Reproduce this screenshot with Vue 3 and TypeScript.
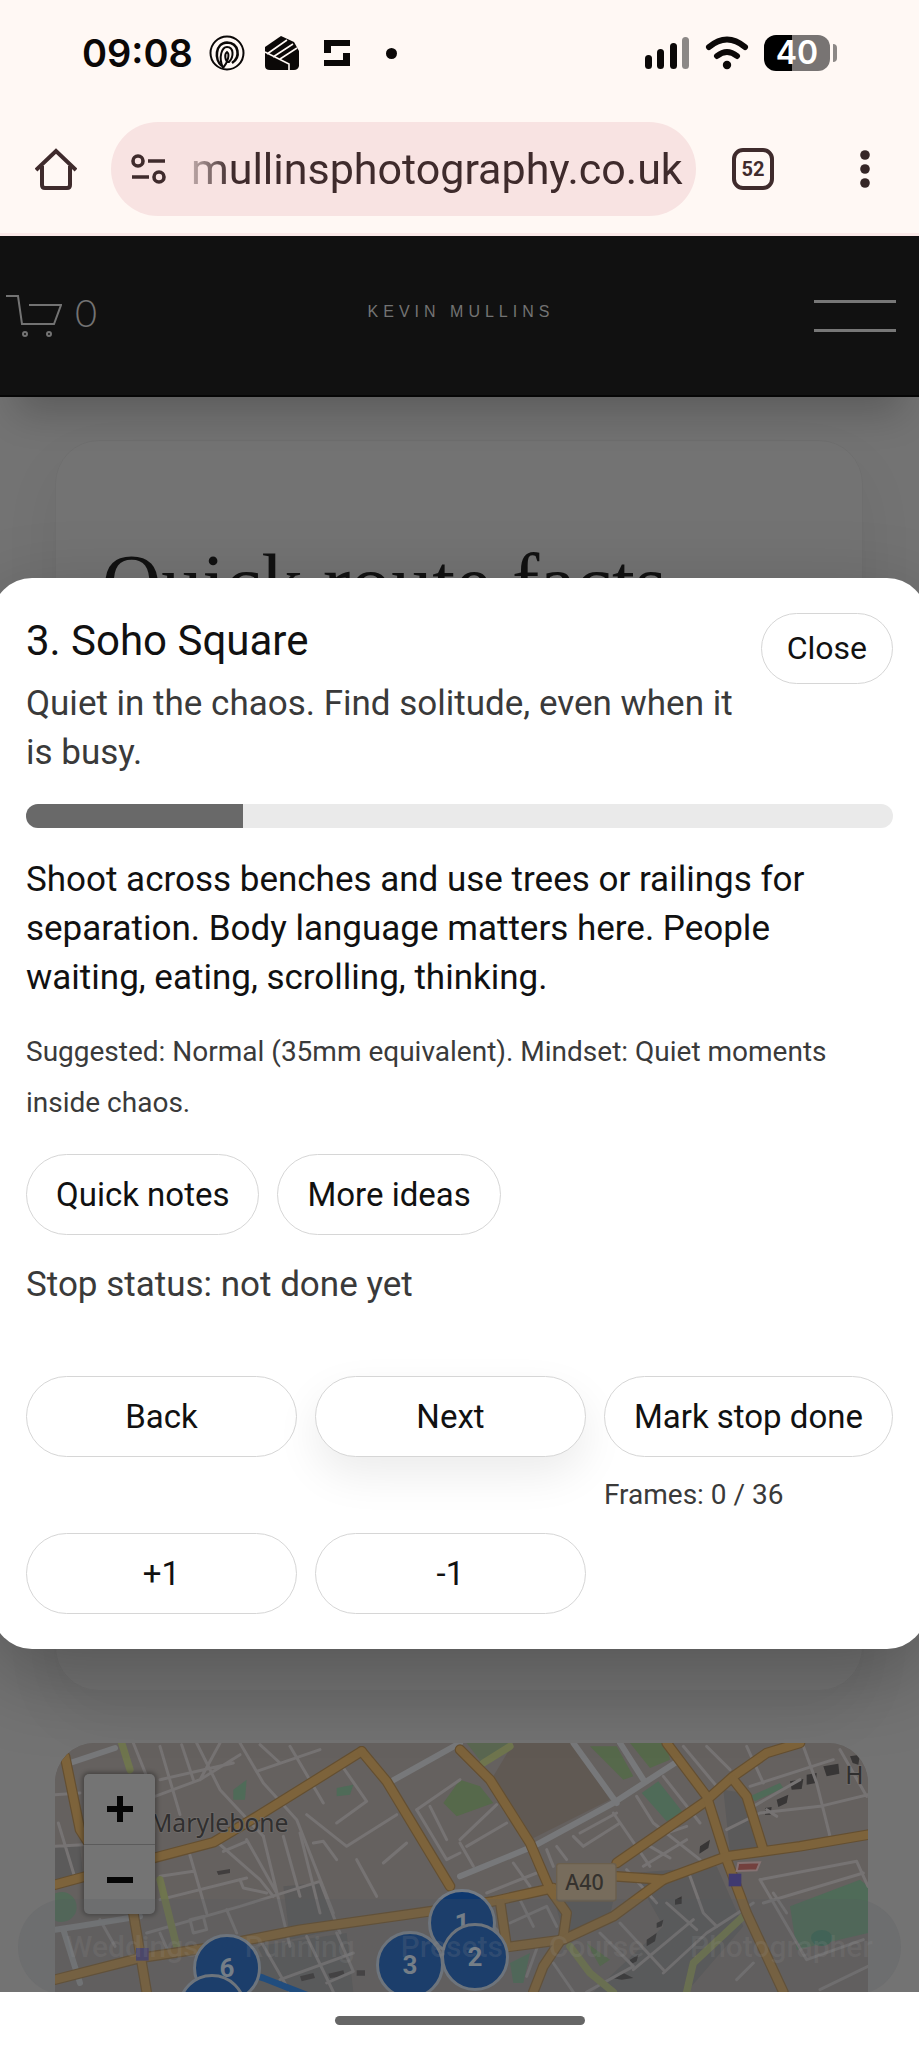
<script setup lang="ts">
import { computed, ref } from 'vue'

interface Pin {
  label: string
  left: number
  top: number
}

const stop = ref(3)
const totalStops = 12
const frames = ref(0)
const done = ref(false)
const open = ref(true)
const progress = computed(() => `${(stop.value / totalStops) * 100}%`)

const pins: Pin[] = [
  { label: '6', left: 172, top: 225 },
  { label: '', left: 157, top: 265 },
  { label: '3', left: 355, top: 222 },
  { label: '1', left: 407, top: 180 },
  { label: '2', left: 420, top: 214 },
]

const mainRoads: string[] = [
  'M165 555 L480 470 L640 428 L780 345 L1085 155',
  'M1085 155 L1160 245 L1350 560',
  'M165 840 L420 775 L620 745 L900 690 L1290 635 L1480 605 L1660 565',
  'M195 170 L240 390 L400 640 L440 877',
  'M1380 150 L1470 240 L1590 430 L1650 570 L1700 640 L1690 710 L1630 800 L1600 877',
  'M1500 745 L1690 720 L1840 650 L1990 540 L1850 530',
  'M1850 490 L2110 310 L2200 230 L2300 160 L2400 130',
  'M2000 130 L2120 290 L2180 480 L2240 640 L2350 877',
  'M1990 540 L2180 470 L2400 440 L2604 405',
  'M2200 240 L2240 290 L2290 450',
  'M1500 605 L1520 740',
]

const wideStreets: string[] = [
  'M210 190 L345 145',
  'M165 690 L235 680 L420 650',
  'M1165 250 L1380 130',
  'M1380 530 L1600 440 L1840 310 L2040 180',
  'M1720 130 L1850 310',
  'M1860 130 L1930 240',
  'M190 690 L240 850',
]

const streets: string[] = [
  'M165 285 L240 280 M175 370 L225 535 M165 440 L250 435',
  'M400 130 L440 230 M480 140 L540 345 M545 135 L580 240 M590 130 L660 270 L790 410',
  'M465 290 L600 240 L720 165 M480 240 L700 190 M660 130 L600 240 M720 130 L790 250 L890 360 L1000 640',
  'M770 215 L960 150 M870 140 L970 310 M780 135 L840 190 M1020 190 L1100 305 L1010 370 M920 345 L1040 440 L1190 345',
  'M790 410 L870 740 M850 410 L900 590 M900 400 L960 640 M740 420 L830 580 M660 435 L780 540 L820 590',
  'M565 450 L620 640 M480 530 L580 515 M480 600 L740 535 M440 700 L720 620 L960 545 L1020 700',
  'M670 455 L740 425 M720 540 L730 565 L800 580 M570 660 L610 650 L620 690 L580 700 Z M680 630 L710 700',
  'M940 430 L970 425 L1010 480 M1070 480 L1130 590 M1150 490 L1220 430 M1250 330 L1340 480 L1380 460',
  'M1250 330 L1380 240 M1290 320 L1340 420 M300 660 L345 740 M480 700 L500 745',
  'M780 720 L870 877 M920 710 L1000 877 M1010 700 L1060 815 L980 850 M840 840 L1060 760 M600 740 L660 877',
  'M1380 420 L1490 315 M1400 440 L1520 370 M1380 430 L1420 500 M1540 490 L1590 560 M1460 580 L1610 520',
  'M1640 450 L1660 500 M1670 440 L1700 480 M1720 410 L1750 440 L1860 370 M1740 400 L1850 340 M1840 340 L1950 500',
  'M1910 290 L1960 370 L2100 480 M1990 230 L2100 370 M1930 500 L2060 420 M1950 440 L2010 475 M1970 410 L2060 380',
  'M2050 140 L2150 260 M2120 140 L2190 210 M2240 140 L2290 250 M2250 260 L2500 180 M2260 320 L2400 240',
  'M2180 390 L2280 340 L2460 320 L2604 285 M2410 140 L2450 250 L2490 410 M2520 150 L2600 290 M2300 330 L2330 350',
  'M2280 540 L2570 485 L2604 560 M2290 610 L2590 520 M2280 540 L2420 780 L2590 720 M2320 580 L2360 640',
  'M2070 530 L2110 640 L2150 680 M1880 510 L1970 610 M2000 610 L2090 690 M1800 700 L1900 800 L1760 877',
  'M1900 810 L2080 660 M1990 820 L2120 700 L2260 610 M1860 670 L1990 810 M2210 840 L2260 790 M2460 870 L2604 800',
  'M1530 670 L1640 620 L1670 680 M1620 720 L1580 830 M1660 790 L1720 877 M1450 650 L1500 700 M1560 600 L1600 680',
]
</script>

<template>
  <div class="screen">
    <header class="status">
      <span class="time">09:08</span>
      <svg class="ic-swirl" viewBox="0 0 36 36" fill="none" stroke="#0b0807" stroke-width="2">
        <circle cx="18" cy="18" r="16.5" />
        <path d="M13 31 C5 25 6 8 18 7.500 C30 8 32 22 23 28" stroke-width="2.6" />
        <path d="M14 33 C9 22 13 12 18 12 C25 12 25 22 20 27 C16 27 15 19 18 17 C21 19 19 27 14 33" stroke-width="2" />
      </svg>
      <svg class="ic-fist" viewBox="0 0 36 36">
        <path d="M1 12 L17 1 L30 7 L35 16 V31 Q34 35 30 35 H6 Q1 35 1 31 Z" fill="#0b0807" />
        <path d="M3 19 L23 5 M9 22 L29 9 M16 24 L33 13 M1 17 L25 29 V35" fill="none" stroke="#fff8f4" stroke-width="1.6" />
      </svg>
      <svg class="ic-s" viewBox="0 0 28 28" fill="#0b0807">
        <path d="M1 1 H27 V7 H8 V14 H1 Z M27 27 H1 V21 H20 V14 H27 Z" />
      </svg>
      <i class="dot"></i>
      <span class="grow"></span>
      <svg class="ic-signal" viewBox="0 0 44 32">
        <rect x="0" y="18" width="7" height="14" rx="3.5" fill="#0b0807" />
        <rect x="12" y="12" width="7" height="20" rx="3.5" fill="#0b0807" />
        <rect x="25" y="6" width="7" height="26" rx="3.5" fill="#0b0807" />
        <rect x="37" y="0" width="7" height="32" rx="3.5" fill="#8c8886" />
      </svg>
      <svg class="ic-wifi" viewBox="0 0 44 34" fill="none" stroke="#0b0807" stroke-linecap="round">
        <path d="M4 11 Q22 -4 40 11" stroke-width="6" />
        <path d="M12 20 Q22 12 32 20" stroke-width="6" />
        <circle cx="22" cy="29" r="4.2" fill="#0b0807" stroke="none" />
      </svg>
      <span class="battery">40</span>
      <i class="battery-tip"></i>
    </header>

    <div class="toolbar">
      <button class="tool home" aria-label="Home">
        <svg viewBox="0 0 42 42" fill="none" stroke="#3f2b2c" stroke-width="4" stroke-linejoin="round">
          <path d="M1 22 L21 3 L41 22" stroke-linejoin="miter" />
          <path d="M7 18 V37 Q7 40 10 40 H32 Q35 40 35 37 V18" />
        </svg>
      </button>
      <div class="address">
        <svg viewBox="0 0 36 30" fill="none" stroke="#3f2b2c" stroke-width="3.6">
          <circle cx="7" cy="7" r="5" />
          <path d="M17 7 H34 M1 23 H18" />
          <circle cx="28" cy="23" r="5" />
        </svg>
        <span class="url">mullinsphotography.co.uk</span>
      </div>
      <button class="tool tabs" aria-label="Tabs"><span>52</span></button>
      <button class="tool more" aria-label="Menu">
        <svg viewBox="0 0 10 38" fill="#352626">
          <circle cx="5" cy="5" r="4.800" /><circle cx="5" cy="19" r="4.800" /><circle cx="5" cy="33" r="4.800" />
        </svg>
      </button>
    </div>

    <div class="viewport">
      <div class="site-header">
        <a class="cart" href="#" aria-label="Cart">
          <svg viewBox="0 0 56 44" fill="none" stroke="#737373" stroke-width="2">
            <path d="M0 2 H12 L16 30 H48 L55 11 H23" />
            <circle cx="19" cy="40" r="2" /><circle cx="43" cy="40" r="2" />
          </svg>
          <span>0</span>
        </a>
        <a class="brand" href="#">KEVIN MULLINS</a>
        <button class="burger" aria-label="Open menu"><i></i><i></i></button>
      </div>

      <main class="page">
        <section class="facts"><h1>Quick route facts</h1></section>
        <section class="map">
          <svg class="tiles" viewBox="165 130 2439 747" preserveAspectRatio="xMinYMin slice">
            <rect x="165" y="130" width="2439" height="900" fill="#65615f" />
            <g fill="#5b5a5a">
              <path d="M165 440 L240 435 L250 540 L165 550 Z M850 560 L960 550 L1010 690 L870 720 Z M700 750 L1040 700 L1060 877 H650 Z" />
              <path d="M1660 590 L1840 600 L1830 650 L1690 700 Z M1900 520 L2150 500 L2230 680 L2060 877 H1780 L1990 680 Z M2170 270 L2230 280 L2280 450 L2190 460 Z" />
            </g>
            <path d="M1540 130 H1720 L1830 300 L1590 420 L1480 230 Z" fill="#605953" />
            <g fill="#56694b">
              <path d="M1330 310 L1380 240 L1440 260 L1480 310 L1370 350 Z" />
              <path d="M1770 140 H1850 L1900 230 L1870 240 Z M1890 130 H2000 L2010 180 L1950 205 Z" />
              <path d="M1400 130 H1530 L1450 195 Z" opacity=".7" />
              <path d="M1760 730 L1830 780 L1800 800 Z" />
            </g>
            <g fill="#4f6b58">
              <circle cx="185" cy="622" r="45" fill="#526a58" />
              <path d="M1925 280 L1975 245 L2050 340 L2000 365 Z" />
              <path d="M2370 620 L2580 540 L2604 560 V700 L2390 750 Z" />
              <path d="M700 270 L740 240 L735 300 L700 300 Z M1010 265 L1060 255 L1050 285 L1010 290 Z" />
              <path d="M2250 290 L2340 250 L2350 265 L2265 305 Z M1530 790 L1590 760 L1570 850 L1540 850 Z" />
              <ellipse cx="2465" cy="715" rx="32" ry="24" fill="#3e6656" />
            </g>
            <g fill="#383636">
              <path d="M2370 245 L2410 238 L2405 268 L2375 270 Z M2420 225 L2450 220 L2448 250 L2420 255 Z M2470 200 L2515 192 L2518 222 L2480 230 Z M2550 170 L2580 165 L2575 195 L2558 190 Z" />
              <path d="M2330 300 L2365 285 L2360 310 L2335 322 Z M2295 325 L2315 322 L2312 345 L2295 345 Z M2100 440 L2130 420 L2125 445 L2098 462 Z" />
              <path d="M1900 835 L1870 820 L1835 835 L1865 840 Z M1940 720 L1970 700 L1965 725 L1940 740 Z M2025 600 L2045 590 L2045 612 L2025 615 Z M1890 780 L1915 765 L1910 785 L1890 795 Z M1970 670 L1990 660 L1985 680 L1970 685 Z" />
              <path d="M900 830 L940 820 L945 835 L905 845 Z M985 822 L1030 812 L1035 830 L990 835 Z M1070 812 H1095 V828 H1070 Z M650 515 L690 508 L690 520 L655 526 Z" opacity=".8" />
            </g>
            <g fill="none" stroke-linecap="round" stroke-linejoin="round">
              <path v-for="d in streets" :key="d" :d="d" stroke="#767373" stroke-width="9" />
              <path v-for="d in wideStreets" :key="d" :d="d" stroke="#77787a" stroke-width="18" />
              <path d="M365 130 L390 210 M480 540 L530 740 M1450 190 L1530 140 M2230 650 L2080 790 L2060 877 M1710 740 L1770 820 L1840 877" stroke="#6f754e" stroke-width="22" />
              <path v-for="d in mainRoads" :key="`c${d}`" :d="d" stroke="#644f31" stroke-width="32" />
              <path v-for="d in mainRoads" :key="`f${d}`" :d="d" stroke="#7d633b" stroke-width="25" />
              <path d="M700 805 L790 835 L930 890" stroke="#154a86" stroke-width="20" />
            </g>
            <rect x="408" y="745" width="38" height="38" fill="#49436c" />
            <rect x="2186" y="522" width="38" height="38" fill="#403a70" />
            <path d="M2215 490 L2280 488 L2270 512 L2210 514 Z" fill="#73403e" stroke="#857272" stroke-width="6" />
            <rect x="1670" y="492" width="178" height="112" rx="8" fill="#776c5c" stroke="#6b5f4d" stroke-width="4" />
            <text x="1696" y="572" class="road-label">A40</text>
            <text x="450" y="396" class="place-label">Marylebone</text>
            <text x="2536" y="252" class="place-label">H</text>
          </svg>
          <button v-for="(p, i) in pins" :key="i" class="pin" :style="{ left: p.left + 'px', top: p.top + 'px' }">{{ p.label }}</button>
          <div class="zoom">
            <button aria-label="Zoom in"><svg viewBox="0 0 26 26"><path d="M0 13 H26 M13 0 V26" stroke="#050505" stroke-width="6" /></svg></button>
            <button aria-label="Zoom out"><svg viewBox="0 0 26 26"><path d="M0 13 H26" stroke="#050505" stroke-width="6" /></svg></button>
          </div>
        </section>
      </main>

      <nav class="quick-links">
        <a href="#">Weddings</a><a href="#">Running</a><a href="#">Presets</a><a href="#">Course</a><a href="#">Photographer</a>
      </nav>

      <div v-if="open" class="backdrop">
        <section class="sheet" role="dialog" aria-labelledby="stop-title">
          <div class="head">
            <div>
              <h2 id="stop-title">{{ stop }}. Soho Square</h2>
              <p class="lead">Quiet in the chaos. Find solitude, even when it is busy.</p>
            </div>
            <button class="btn close" @click="open = false">Close</button>
          </div>
          <div class="bar"><div class="fill" :style="{ width: progress }"></div></div>
          <p class="body">Shoot across benches and use trees or railings for separation. Body language matters here. People waiting, eating, scrolling, thinking.</p>
          <p class="hint">Suggested: Normal (35mm equivalent). Mindset: Quiet moments inside chaos.</p>
          <div class="row">
            <button class="btn">Quick notes</button>
            <button class="btn">More ideas</button>
          </div>
          <p class="state">Stop status: {{ done ? 'done' : 'not done yet' }}</p>
          <div class="actions">
            <button class="btn" @click="stop--">Back</button>
            <button class="btn primary" @click="stop++">Next</button>
            <button class="btn" @click="done = true">Mark stop done</button>
            <span class="frames">Frames: {{ frames }} / 36</span>
            <button class="btn" @click="frames++">+1</button>
            <button class="btn" @click="frames--">-1</button>
          </div>
        </section>
      </div>
    </div>

    <footer class="gesture"><i></i></footer>
  </div>
</template>

<style>
body {
  margin: 0;
}
</style>

<style scoped>
.screen {
  display: flex;
  flex-direction: column;
  min-height: 100vh;
  overflow: hidden;
  background: #fff8f4;
  font-family: Roboto, "Liberation Sans", sans-serif;
  color: #111;
}
.screen * {
  box-sizing: border-box;
}
button {
  font: inherit;
  color: inherit;
  border: 0;
  padding: 0;
  background: none;
  cursor: pointer;
}
a {
  color: inherit;
  text-decoration: none;
}
svg {
  display: block;
  flex: none;
}
p, h1, h2 {
  margin: 0;
  font-weight: 400;
}

.status {
  display: flex;
  align-items: center;
  height: 106px;
  padding: 0 82px;
  color: #0b0807;
}
.time {
  font: 600 38px/48px Inter, sans-serif;
}
.ic-swirl {
  width: 36px;
  margin-left: 16px;
}
.ic-fist {
  width: 36px;
  margin-left: 19px;
}
.ic-s {
  width: 28px;
  margin-left: 23px;
}
.dot {
  width: 11px;
  height: 11px;
  margin-left: 35px;
  border-radius: 50%;
  background: #0b0807;
}
.grow {
  flex: 1;
}
.ic-signal {
  width: 44px;
}
.ic-wifi {
  width: 44px;
  margin-left: 16px;
}
.battery {
  width: 66px;
  height: 36px;
  margin-left: 15px;
  border-radius: 12px;
  background: linear-gradient(90deg, #000 42%, #787473 42%);
  color: #fff;
  font: 600 32px/36px Inter, sans-serif;
  text-align: center;
}
.battery-tip {
  width: 4px;
  height: 18px;
  margin-left: 3px;
  border-radius: 0 4px 4px 0;
  background: #8c8886;
}

.toolbar {
  display: flex;
  align-items: center;
  height: 130px;
  padding-bottom: 2px;
  border-bottom: 3px solid #fbe9e8;
}
.tool {
  display: flex;
  align-items: center;
  justify-content: center;
  height: 94px;
}
.home {
  width: 111px;
}
.home svg {
  width: 42px;
}
.address {
  display: flex;
  flex: 1;
  align-items: center;
  height: 94px;
  padding: 0 8px 0 20px;
  border-radius: 47px;
  background: #f8e3e2;
}
.address svg {
  width: 36px;
}
.url {
  flex: 1;
  width: 0;
  margin-left: 24px;
  color: #3f2b2c;
  font-size: 43px;
  line-height: 56px;
  white-space: nowrap;
  -webkit-mask-image: linear-gradient(90deg, rgba(0, 0, 0, .3), #000 40px);
  mask-image: linear-gradient(90deg, rgba(0, 0, 0, .3), #000 40px);
}
.tabs {
  width: 114px;
}
.tabs span {
  width: 42px;
  height: 42px;
  border: 4px solid #3f2b2c;
  border-radius: 11px;
  color: #3f2b2c;
  font: 700 20px/35px Roboto, sans-serif;
}
.more {
  width: 109px;
}
.more svg {
  width: 10px;
}

.viewport {
  position: relative;
  display: flex;
  flex: 1;
  flex-direction: column;
  overflow: hidden;
  background: #737373;
}
.site-header {
  display: flex;
  align-items: center;
  justify-content: space-between;
  height: 161px;
  padding: 0 23px 0 6px;
  background: #111;
  border-bottom: 2px solid #060606;
  box-shadow: 0 32px 36px -16px rgba(0, 0, 0, .2);
  color: #737373;
}
.cart, .burger {
  width: 91px;
}
.cart {
  display: flex;
  align-items: flex-start;
  gap: 13px;
}
.cart svg {
  width: 56px;
}
.cart span {
  font: 300 38px/36px Lato, sans-serif;
}
.brand {
  font: 16px/24px "Liberation Sans", Arial, sans-serif;
  letter-spacing: 5px;
  padding: 0 0 8px 20px;
}
.burger {
  display: flex;
  flex-direction: column;
  align-items: flex-end;
  gap: 26px;
}
.burger i {
  width: 82px;
  height: 3px;
  background: #777;
}
.page {
  display: flex;
  flex: 1;
  flex-direction: column;
  gap: 52px;
  padding: 43px 51px 0 55px;
}
.facts {
  flex: 1;
  margin-right: 5px;
  padding: 97px 46px;
  border: 1px solid rgba(0, 0, 0, .04);
  border-radius: 44px;
  box-shadow: 0 24px 60px rgba(0, 0, 0, .06);
}
h1 {
  color: #111;
  font: 400 82px/92px "Liberation Serif", serif;
  white-space: nowrap;
}
.map {
  position: relative;
  height: 249px;
  overflow: hidden;
  border-radius: 40px 40px 0 0;
  background: #65615f;
}
.tiles {
  width: 100%;
  height: 100%;
}
.road-label {
  font: 500 64px "Noto Sans", sans-serif;
  fill: #35322e;
}
.place-label {
  font: 74px "Noto Sans", sans-serif;
  fill: #302f2f;
  stroke: #6f6b69;
  stroke-width: 5px;
  paint-order: stroke;
}
.pin {
  position: absolute;
  width: 68px;
  height: 68px;
  margin: -34px 0 0 -34px;
  border: 3px solid #747b84;
  border-radius: 50%;
  background: #0e386f;
  color: #7d8792;
  font: 700 26px/62px Roboto, sans-serif;
}
.zoom {
  position: absolute;
  left: 29px;
  top: 31px;
  width: 71px;
  border-radius: 5px;
  background: #747474;
  box-shadow: 0 0 4px 2px rgba(0, 0, 0, .3);
}
.zoom button {
  display: flex;
  align-items: center;
  justify-content: center;
  width: 100%;
  height: 70px;
}
.zoom button + button {
  border-top: 1px solid #5b5b5b;
}
.zoom svg {
  width: 26px;
}
.quick-links {
  position: absolute;
  left: 18px;
  right: 18px;
  bottom: -3px;
  display: flex;
  align-items: center;
  justify-content: space-between;
  height: 96px;
  padding: 0 28px 0 48px;
  border-radius: 48px;
  background: rgba(84, 90, 94, .2);
  color: rgba(150, 150, 150, .16);
  font: 500 30px/36px Roboto, sans-serif;
}

.backdrop {
  position: absolute;
  inset: 0;
  display: flex;
  align-items: center;
  padding-bottom: 2px;
}
.sheet {
  flex: 1;
  margin: 0 -8px;
  padding: 35px 34px;
  border-radius: 40px;
  background: #fff;
  box-shadow: 0 26px 80px rgba(0, 0, 0, .25);
}
.head {
  display: flex;
  align-items: flex-start;
  justify-content: space-between;
  gap: 18px;
}
h2 {
  font-size: 42px;
  line-height: 56px;
}
.lead, .body, .state {
  font-size: 35px;
  line-height: 49px;
}
.lead {
  margin-top: 10px;
}
.lead, .hint, .state, .frames {
  color: #3a3a3a;
}
.btn {
  height: 81px;
  padding: 0 29px;
  border: 1px solid #d6d6d6;
  border-radius: 41px;
  background: #fff;
  font-size: 33px;
  line-height: 49px;
  white-space: nowrap;
}
.close {
  height: 71px;
  padding: 0 25px;
  font-size: 32px;
  line-height: 40px;
}
.bar {
  height: 24px;
  margin-top: 27px;
  overflow: hidden;
  border-radius: 12px;
  background: #eaeaea;
}
.fill {
  height: 100%;
  background: #696969;
}
.body {
  margin-top: 27px;
}
.hint {
  margin-top: 24px;
  font-size: 28px;
  line-height: 51px;
}
.row {
  display: flex;
  gap: 18px;
  margin-top: 26px;
}
.state {
  margin-top: 25px;
}
.actions {
  display: grid;
  grid-template-columns: 1fr 1fr auto;
  gap: 18px;
  margin-top: 67px;
}
.primary {
  box-shadow: 0 18px 44px rgba(0, 0, 0, .08);
}
.frames {
  grid-column: 3;
  font-size: 28px;
  line-height: 40px;
}

.gesture {
  display: flex;
  align-items: center;
  justify-content: center;
  height: 56px;
  background: #fff;
}
.gesture i {
  width: 250px;
  height: 9px;
  border-radius: 5px;
  background: #666;
}
</style>
